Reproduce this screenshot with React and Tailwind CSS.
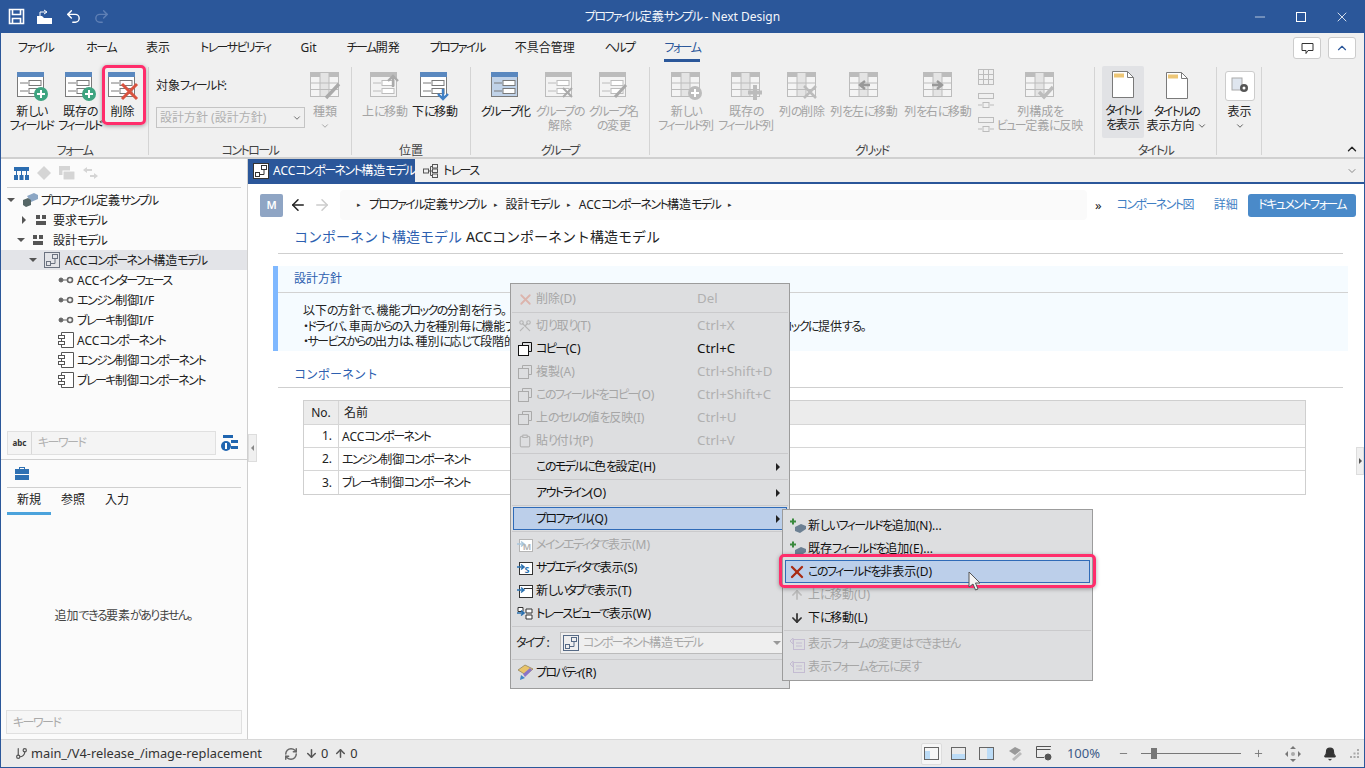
import React from 'react';
import { ArrowDown, ArrowLeft, ArrowRight, ArrowUp, Bell, ChevronDown, ChevronUp, Clipboard, GitBranch, Minus, Plus, Redo2, RefreshCw, Scissors, Undo2, X } from 'lucide-react';

const ON = '#7a7a7a';
const OFF = '#bcbcbc';

// kana runs are set tighter, the UI font of the picture has narrow kana
const J = ({ children }) => (
    <>
        {String(children).split(/([\u3040-\u30ff]+)/).map((part, i) => (
            i % 2 ? <span key={i} className="tracking-[-0.13em]">{part}</span> : part
        ))}
    </>
);

const FormIcon = ({ off, badge, fill }) => {
    const c = off ? OFF : ON;
    return (
        <svg width="32" height="30" viewBox="0 0 32 30">
            <rect x="1.5" y="1.5" width="26" height="24" fill={fill || (off ? '#f3f3f3' : '#fff')} stroke={c} />
            <rect x="1" y="1" width="27" height="5" fill={off ? OFF : '#5a88bf'} />
            <path d="M4 12h8M4 20h8" stroke={c} fill="none" />
            <rect x="13" y="9.5" width="12" height="5" fill="#fff" stroke={c} />
            <rect x="13" y="17.5" width="12" height="5" fill="#fff" stroke={c} />
            {badge === 'plus' && (
                <g>
                    <circle cx="25" cy="23" r="7" fill="#3ea480" />
                    <path d="M25 19v8M21 23h8" stroke="#fff" strokeWidth="2" />
                </g>
            )}
            {badge === 'x' && <path d="M15 13l15 15M30 13L15 28" stroke="#d9533f" strokeWidth="3" />}
            {badge === 'greyx' && <path d="M19 17l9 9M28 17l-9 9" stroke="#aaa" strokeWidth="2" />}
            {badge === 'pen' && <path d="M17 26l11-12" stroke="#aaa" strokeWidth="3" />}
            {badge === 'up' && <path d="M24 16V5M19 10l5-5 5 5" stroke="#aaa" strokeWidth="2.4" fill="none" />}
            {badge === 'down' && <path d="M24 18v10M19 23l5 5 5-5" stroke="#3f7fc4" strokeWidth="2.4" fill="none" />}
        </svg>
    );
};

const GridIcon = ({ badge, w = 32 }) => (
    <svg width={w} height="30" viewBox={`0 0 ${w} 30`}>
        <rect x="1.5" y="1.5" width="28" height="24" fill="#f4f4f4" stroke={OFF} />
        <rect x="1" y="1" width="29" height="5" fill={OFF} />
        <rect x="11" y="1.5" width="9" height="24" fill="#e4e4e4" stroke={OFF} />
        <path d="M1 12h29M1 18.5h29" stroke={OFF} />
        {badge === 'plus' && (
            <g>
                <circle cx="25" cy="22" r="7" fill={OFF} />
                <path d="M25 18v8M21 22h8" stroke="#fff" strokeWidth="2" />
            </g>
        )}
        {badge === 'cross' && <path d="M25 14v15M18 21.5h14" stroke={OFF} strokeWidth="4" />}
        {badge === 'x' && <path d="M18 15l12 12M30 15L18 27" stroke={OFF} strokeWidth="2.6" />}
        {badge === 'pen' && <path d="M17 27L30 13" stroke="#aaa" strokeWidth="3.4" />}
        {badge === 'left' && <path d="M22 14h-8M17 10l-5 4 5 4" stroke="#999" strokeWidth="2.4" fill="none" />}
        {badge === 'right' && <path d="M10 14h8M15 10l5 4-5 4" stroke="#999" strokeWidth="2.4" fill="none" />}
        {badge === 'check' && <path d="M15 21l5 5 9-10" stroke={OFF} strokeWidth="3.4" fill="none" />}
    </svg>
);

const PageIcon = () => (
    <svg width="24" height="30" viewBox="0 0 24 30">
        <path d="M1.5 1.5h15l6 6v20h-21z" fill="#fff" stroke="#7a7a7a" />
        <path d="M16.5 1.5v6h6" fill="none" stroke="#7a7a7a" />
        <rect x="3" y="3.5" width="10" height="4" fill="#edc676" />
    </svg>
);

const RibbonButton = ({ w, icon, lines, off, chev }) => (
    <div className="flex flex-col items-center shrink-0" style={{ width: w }}>
        <div className="h-[36px] flex items-center justify-center mt-[1px]">{icon}</div>
        <div className={`mt-[1px] text-center leading-[14px] whitespace-nowrap ${off ? 'text-[#a4a4a4]' : 'text-[#222]'}`}>
            {lines.map((l, i) => (
                <div key={l} className="flex items-center justify-center">
                    <J>{l}</J>
                    {chev && i === lines.length - 1 && <ChevronDown size={10} color="#444" className="ml-[2px]" />}
                </div>
            ))}
        </div>
    </div>
);

const Group = ({ label, w, children, className = '' }) => (
    <div className={`relative h-[88px] shrink-0 mt-[5px] border-r border-[#d4d4d4] ${className}`} style={{ width: w }}>
        <div className="flex h-[76px] items-start">{children}</div>
        {label && <div className="absolute bottom-[-3px] left-0 right-0 text-center text-[#444] leading-[14px]"><J>{label}</J></div>}
    </div>
);

const ModelGroupIcon = () => (
    <svg width="12" height="12" viewBox="0 0 12 12" fill="#555">
        <rect x="1" y="1" width="4" height="4" />
        <rect x="7" y="1" width="4" height="4" />
        <rect x="1" y="7" width="10" height="4" />
    </svg>
);
const DiagramIcon = ({ c = '#6b7280' }) => (
    <svg width="16" height="16" viewBox="0 0 16 16" fill="none" stroke={c}>
        <rect x="0.5" y="0.5" width="15" height="15" />
        <rect x="8.5" y="2.5" width="5" height="4" />
        <rect x="2.5" y="9.5" width="4" height="4" />
        <path d="M11 6.5v5H6.5" />
    </svg>
);
const InterfaceIcon = () => (
    <svg width="16" height="10" viewBox="0 0 16 10" fill="none" stroke="#666">
        <circle cx="3" cy="5" r="2" fill="#666" />
        <path d="M5 5h4" />
        <circle cx="12" cy="5" r="2.5" strokeWidth="1.6" />
    </svg>
);
const ComponentIcon = () => (
    <svg width="16" height="16" viewBox="0 0 16 16" fill="#fff" stroke="#555">
        <path d="M3.5 0.5h12v15h-12z" />
        <rect x="0.5" y="3.5" width="6" height="3" />
        <rect x="0.5" y="9.5" width="6" height="3" />
    </svg>
);
const PackageIcon = () => (
    <svg width="16" height="14" viewBox="0 0 16 14">
        <path d="M5 3l7-3 4 2v4l-7 3z" fill="#8ba6c4" />
        <path d="M1 7l5-2 3 2v5l-5 2-3-2z" fill="#566" />
    </svg>
);
const Caret = ({ open }) => (
    <svg width="8" height="8" viewBox="0 0 8 8" fill="#555">
        {open ? <path d="M0 2h8L4 6z" /> : <path d="M2 0l4 4-4 4z" />}
    </svg>
);

const treeRows = [
    { label: 'プロファイル定義サンプル', pad: 6, caret: 'open', icon: <PackageIcon />, gap: 3 },
    { label: '要求モデル', pad: 19, caret: 'closed', icon: <ModelGroupIcon />, gap: 6 },
    { label: '設計モデル', pad: 16, caret: 'open', icon: <ModelGroupIcon />, gap: 9 },
    { label: 'ACCコンポーネント構造モデル', pad: 28, caret: 'open', icon: <DiagramIcon />, gap: 5, selected: true },
    { label: 'ACCインターフェース', pad: 57, icon: <InterfaceIcon />, gap: 3 },
    { label: 'エンジン制御I/F', pad: 57, icon: <InterfaceIcon />, gap: 3 },
    { label: 'ブレーキ制御I/F', pad: 57, icon: <InterfaceIcon />, gap: 3 },
    { label: 'ACCコンポーネント', pad: 57, icon: <ComponentIcon />, gap: 3 },
    { label: 'エンジン制御コンポーネント', pad: 57, icon: <ComponentIcon />, gap: 3 },
    { label: 'ブレーキ制御コンポーネント', pad: 57, icon: <ComponentIcon />, gap: 3 },
];

const Copy = ({ c = '#aaa' }) => (
    <svg width="14" height="14" viewBox="0 0 14 14" fill="none" stroke={c}>
        <path d="M4.5 3.5v-3h9v9h-3" />
        <rect x="0.5" y="3.5" width="10" height="10" fill={c === '#111' ? '#fff' : 'none'} />
    </svg>
);

const JumpIcon = ({ letter, off, tree, tab }) => (
    <svg width="16" height="15" viewBox="0 0 16 15" fill="none" stroke={off ? '#b5b5b5' : '#333'}>
        {!tree && <rect x="2.5" y="2.5" width="13" height="12" fill="#fff" />}
        {tab && <path d="M7 5.5h8" />}
        {tree && <path d="M1 1.5h5v4H1zM9 3h6v4H9zM9 9h6v4H9z" fill="#fff" />}
        <path d="M0 7h6M4 4.5L7 7l-3 2.5" stroke={off ? '#a9c6dc' : '#2a71b0'} strokeWidth="1.6" />
        {letter && <text x="10" y="13" fontSize="9" stroke="none" textAnchor="middle" fontWeight="700" fill={off ? '#b5b5b5' : '#2a71b0'}>{letter}</text>}
    </svg>
);

const AddFieldIcon = () => (
    <svg width="18" height="16" viewBox="0 0 18 16">
        <path d="M2 3.5h6M5 0.5v6" stroke="#3b8a3e" strokeWidth="2" />
        <path d="M7 9l6-3 5 2v3l-6 4-5-2z" fill="#6c8093" />
    </svg>
);
const FormResetIcon = () => (
    <svg width="15" height="13" viewBox="0 0 15 13" fill="none" stroke="#c4bcd2">
        <rect x="3.5" y="2.5" width="11" height="10" />
        <path d="M6 6h6M6 9h6M0 4l3-3v6z" />
    </svg>
);
const PropertyIcon = () => (
    <svg width="17" height="17" viewBox="0 0 17 17">
        <path d="M1 6l7-5 8 4-7 6z" fill="#e9c46a" stroke="#8a7b55" strokeWidth="0.7" />
        <path d="M6 10l7-6 2 2-7 7z" fill="#8a74c9" />
        <path d="M3 16l1-5 4 3z" fill="#3f86c6" />
    </svg>
);

const mainMenu = [
    { label: '削除(D)', key: 'Del', off: true, h: 24, icon: <X size={17} color="#dcb4ac" strokeWidth={2.5} /> },
    'sep',
    { label: '切り取り(T)', key: 'Ctrl+X', off: true, icon: <Scissors size={14} color="#b5b5b5" className="rotate-90" /> },
    { label: 'コピー(C)', key: 'Ctrl+C', icon: <Copy c="#111" /> },
    { label: '複製(A)', key: 'Ctrl+Shift+D', off: true, icon: <Copy /> },
    { label: 'このフィールドをコピー(O)', key: 'Ctrl+Shift+C', off: true, icon: <Copy /> },
    { label: '上のセルの値を反映(I)', key: 'Ctrl+U', off: true, icon: <Copy /> },
    { label: '貼り付け(P)', key: 'Ctrl+V', off: true, icon: <Clipboard size={14} color="#b5b5b5" /> },
    'sep',
    { label: 'このモデルに色を設定(H)', arrow: true },
    'sep',
    { label: 'アウトライン(O)', arrow: true },
    'sep',
    { label: 'プロファイル(Q)', arrow: true, active: true },
    'sep',
    { label: 'メインエディタで表示(M)', off: true, icon: <JumpIcon letter="M" off /> },
    { label: 'サブエディタで表示(S)', icon: <JumpIcon letter="S" /> },
    { label: '新しいタブで表示(T)', icon: <JumpIcon tab /> },
    { label: 'トレースビューで表示(W)', icon: <JumpIcon tree /> },
    'sep',
    'type',
    'sep',
    { label: 'プロパティ(R)', icon: <PropertyIcon /> },
];

const subMenu = [
    { label: '新しいフィールドを追加(N)...', icon: <AddFieldIcon /> },
    { label: '既存フィールドを追加(E)...', icon: <AddFieldIcon /> },
    { label: 'このフィールドを非表示(D)', active: true, icon: <X size={20} color="#a92b12" strokeWidth={2.8} /> },
    { label: '上に移動(U)', off: true, icon: <ArrowUp size={14} color="#bbb" strokeWidth={3} /> },
    { label: '下に移動(L)', icon: <ArrowDown size={14} color="#333" strokeWidth={3} /> },
    'sep',
    { label: '表示フォームの変更はできません', off: true, icon: <FormResetIcon /> },
    { label: '表示フォームを元に戻す', off: true, icon: <FormResetIcon /> },
];

const MenuRow = ({ item, keyWidth }) => (
    <div className={`relative flex items-center mx-[2px] border ${item.active ? 'bg-[#bccfea] border-[#2f6bb8]' : 'border-transparent'} ${item.off ? 'text-[#a6a6a6]' : 'text-[#111]'}`} style={{ height: item.h || 23 }}>
        <div className="w-[22px] flex justify-center shrink-0">{item.icon}</div>
        <div className="whitespace-nowrap" style={{ width: keyWidth }}><J>{item.label}</J></div>
        {item.key && <div className={`text-[13.3px] ${item.off ? 'text-[#b0b0b0]' : 'text-[#111]'}`}>{item.key}</div>}
        {item.arrow && <div className="absolute right-[6px] w-0 h-0 border-y-[4px] border-y-transparent border-l-[4px] border-l-[#222]" />}
    </div>
);

const tabs = ['ファイル', 'ホーム', '表示', 'トレーサビリティ', 'Git', 'チーム開発', 'プロファイル', '不具合管理', 'ヘルプ', 'フォーム'];

export default function App() {
    return (
        <div className="relative w-[1365px] h-[768px] overflow-hidden flex flex-col bg-white border-x border-b border-[#2b579a] text-[12px] text-[#222] [font-family:'Noto_Sans','Noto_Sans_CJK_JP',sans-serif] [font-feature-settings:'palt']">
            {/* title bar */}
            <div className="relative h-[33px] shrink-0 bg-[#2b579a] flex items-center text-white">
                <div className="flex items-center gap-[11px] pl-[7px]">
                    <svg width="17" height="17" viewBox="0 0 17 17" fill="none" stroke="#fff" strokeWidth="1.6"><path d="M1.5 1.5h14v14h-14z" /><path d="M4.5 1.5v5h8v-5M4.5 15.5v-5h8v5" /></svg>
                    <svg width="18" height="16" viewBox="0 0 18 16" fill="#fff"><path d="M1 7h5l2 2h8v6H1z" /><path d="M4 7V3h6M8 1l3 2-3 2" stroke="#fff" fill="none" /></svg>
                    <Undo2 size={17} strokeWidth={2} />
                    <Redo2 size={17} strokeWidth={2} color="#5e7fb5" />
                </div>
                <div className="absolute left-0 right-0 text-center text-[#f4f6fa]"><J>プロファイル定義サンプル - Next Design</J></div>
                <div className="ml-auto flex items-center gap-[28px] pr-[14px]">
                    <Minus size={16} strokeWidth={1} />
                    <div className="w-[10px] h-[10px] border border-white" />
                    <X size={16} strokeWidth={1.2} />
                </div>
            </div>

            {/* ribbon tabs */}
            <div className="h-[29px] shrink-0 bg-[#f0f0f0] flex items-center pl-[17px] gap-[30px] relative">
                {tabs.map((t) => (
                    <div key={t} className={`relative h-full flex items-center whitespace-nowrap ${t === 'ホーム' ? 'ml-[3px]' : ''} ${t === 'フォーム' ? 'text-[#2b579a]' : ''}`}>
                        <J>{t}</J>
                        {t === 'フォーム' && <div className="absolute bottom-0 left-0 right-0 h-[3px] bg-[#2b579a]" />}
                    </div>
                ))}
                <div className="absolute right-[8px] top-[4px] flex gap-[7px]">
                    <div className="w-[28px] h-[22px] bg-white border border-[#ccc] rounded-[3px] flex items-center justify-center">
                        <svg width="13" height="13" viewBox="0 0 13 13" fill="none" stroke="#333"><path d="M1 1.5h11v7H7l-2 3v-3H1z" /></svg>
                    </div>
                    <div className="w-[28px] h-[22px] bg-white border border-[#ccc] rounded-[3px] flex items-center justify-center">
                        <ChevronUp size={14} color="#2b579a" />
                    </div>
                </div>
            </div>

            {/* ribbon */}
            <div className="relative h-[97px] shrink-0 bg-[#f0f0f0] border-b-2 border-[#d0d0d0] flex">
                <Group label="フォーム" w={148} className="pl-[6px]">
                    <RibbonButton w={49} icon={<FormIcon badge="plus" />} lines={['新しい', 'フィールド']} />
                    <RibbonButton w={48} icon={<FormIcon badge="plus" />} lines={['既存の', 'フィールド']} />
                    <RibbonButton w={37} icon={<FormIcon badge="x" />} lines={['削除']} />
                </Group>
                <Group label="コントロール" w={203} className="pl-[7px]">
                    <div className="w-[149px] shrink-0">
                        <div className="mt-[11px] h-[16px] leading-[16px]"><J>対象フィールド:</J></div>
                        <div className="mt-[13px] h-[21px] border border-[#c4c4c4] bg-[#f0f0f0] flex items-center pl-[3px] pr-[2px] text-[#b0b0b0]">
                            設計方針 (設計方針)
                            <ChevronDown size={10} color="#555" className="ml-auto" />
                        </div>
                    </div>
                    <div className="w-[40px] flex flex-col items-center shrink-0">
                        <div className="h-[36px] mt-[1px] flex items-center"><GridIcon badge="pen" /></div>
                        <div className="mt-[1px] text-[#a4a4a4] leading-[14px]">種類</div>
                        <ChevronDown size={10} color="#999" className="mt-[2px]" />
                    </div>
                </Group>
                <Group label="位置" w={119} className="pl-[8px]">
                    <RibbonButton w={50} off icon={<FormIcon off badge="up" />} lines={['上に移動']} />
                    <RibbonButton w={50} icon={<FormIcon badge="down" />} lines={['下に移動']} />
                </Group>
                <Group label="グループ" w={179} className="pl-[8px]">
                    <RibbonButton w={54} icon={<FormIcon fill="#c0d2e8" />} lines={['グループ化']} />
                    <RibbonButton w={54} off icon={<FormIcon off badge="greyx" />} lines={['グループの', '解除']} />
                    <RibbonButton w={54} off icon={<FormIcon off badge="pen" />} lines={['グループ名', 'の変更']} />
                </Group>
                <Group label="グリッド" w={445} className="pl-[6px]">
                    <RibbonButton w={60} off icon={<GridIcon badge="plus" />} lines={['新しい', 'フィールド列']} />
                    <RibbonButton w={60} off icon={<GridIcon badge="cross" />} lines={['既存の', 'フィールド列']} />
                    <RibbonButton w={52} off icon={<GridIcon badge="x" />} lines={['列の削除']} />
                    <RibbonButton w={72} off icon={<GridIcon badge="left" />} lines={['列を左に移動']} />
                    <RibbonButton w={76} off icon={<GridIcon badge="right" />} lines={['列を右に移動']} />
                    <div className="w-[20px] shrink-0 flex flex-col items-center gap-[8px] pt-[2px]">
                        <svg width="16" height="16" viewBox="0 0 16 16" fill="none" stroke={OFF}><rect x="0.5" y="0.5" width="15" height="15" /><path d="M5.5 0v16M0 5.5h16M0 10.5h16M10.5 0v16" /></svg>
                        <svg width="16" height="16" viewBox="0 0 16 16" fill="none" stroke={OFF}><rect x="0.5" y="0.5" width="15" height="5" /><rect x="5" y="9.5" width="6" height="5" /><path d="M0 12h4M12 12h4" /></svg>
                        <svg width="16" height="16" viewBox="0 0 16 16" fill="none" stroke={OFF}><rect x="0.5" y="0.5" width="15" height="5" /><rect x="5" y="9.5" width="6" height="5" /><path d="M0 12h4M12 12h4" /></svg>
                    </div>
                    <RibbonButton w={88} off icon={<GridIcon badge="check" />} lines={['列構成を', 'ビュー定義に反映']} />
                </Group>
                <Group label="タイトル" w={122} className="pl-[7px]">
                    <div className="bg-[#e1e2e5] rounded-[2px] h-[72px] -mt-px"><RibbonButton w={42} icon={<PageIcon />} lines={['タイトル', 'を表示']} /></div>
                    <RibbonButton w={65} icon={<PageIcon />} lines={['タイトルの', '表示方向']} chev />
                </Group>
                <Group w={45} className="pl-[7px]">
                    <div className="flex flex-col items-center w-[31px] shrink-0">
                        <div className="mt-[4px] w-[30px] h-[30px] bg-white border border-[#ccc] rounded-[3px] flex items-center justify-center">
                            <svg width="18" height="18" viewBox="0 0 18 18"><rect x="1" y="1" width="10" height="12" fill="#dfe6ef" stroke="#aaa" /><circle cx="13" cy="11" r="4" fill="#555" /><circle cx="13" cy="11" r="1.5" fill="#fff" /></svg>
                        </div>
                        <div className="mt-[4px] leading-[14px]">表示</div>
                        <ChevronDown size={10} color="#444" className="mt-[2px]" />
                    </div>
                </Group>
                <ChevronUp size={14} color="#222" strokeWidth={2.4} className="absolute right-[5px] bottom-[1px]" />
            </div>

            {/* body */}
            <div className="flex-1 min-h-0 flex">
                <div className="w-[247px] shrink-0 bg-[#fbfbfb] border-r border-[#cfcfcf] flex flex-col">
                    <div className="h-[29px] shrink-0 mx-[6px] border-b border-[#d2d2d2] flex items-center gap-[8px] pl-[7px]">
                        <svg width="15" height="13" viewBox="0 0 15 13" fill="#2b6cb0"><rect x="0" y="0" width="15" height="4" /><rect x="0" y="8" width="4" height="5" /><rect x="5.5" y="8" width="4" height="5" /><rect x="11" y="8" width="4" height="5" /><path d="M2 4h1v4H2zM7 4h1v4H7zM12 4h1v4h-1z" /></svg>
                        <svg width="14" height="14" viewBox="0 0 14 14" fill="#d5d5d5"><path d="M7 0l7 7-7 7-7-7z" /></svg>
                        <svg width="16" height="14" viewBox="0 0 16 14" fill="#d5d5d5"><rect x="0" y="0" width="11" height="9" /><rect x="4" y="5" width="12" height="9" stroke="#fff" /></svg>
                        <svg width="15" height="13" viewBox="0 0 15 13" fill="#d5d5d5"><path d="M0 3l4-3v2h5v2H4v2zM15 9l-4 3v-2H7V8h4V6z" /></svg>
                    </div>
                    <div className="pt-[2px] h-[243px] shrink-0">
                        {treeRows.map((r) => (
                            <div key={r.label} className={`h-[20px] flex items-center ${r.selected ? 'bg-[#e3e4e8]' : ''}`} style={{ paddingLeft: r.pad }}>
                                {r.caret && <div className="w-[8px] mr-[7px] flex justify-center"><Caret open={r.caret === 'open'} /></div>}
                                <div style={{ marginRight: r.gap }} className="flex items-center">{r.icon}</div>
                                <span className="whitespace-nowrap pt-[1px]"><J>{r.label}</J></span>
                            </div>
                        ))}
                    </div>
                    <div className="shrink-0 flex items-center h-[24px] pl-[6px] pr-[8px]">
                        <div className="w-[209px] h-[24px] border border-[#e0e0e0] bg-[#f4f4f4] flex items-center">
                            <div className="w-[24px] h-full border-r border-[#d8d8d8] flex items-center justify-center text-[8px] font-bold text-[#333]">abc</div>
                            <span className="pl-[6px] text-[#b0b0b0]"><J>キーワード</J></span>
                        </div>
                        <svg className="ml-auto mr-[1px]" width="17" height="16" viewBox="0 0 17 16" fill="#1f65b0"><rect x="2" y="0" width="10" height="3" /><circle cx="5" cy="11" r="5" /><rect x="10" y="5" width="7" height="3" /><rect x="10" y="11" width="7" height="3" /><rect x="4" y="8" width="2" height="6" fill="#fff" /></svg>
                    </div>
                    <div className="h-[5px] shrink-0 border-b border-[#d0d0d0]" />
                    <div className="h-[28px] shrink-0 mx-[6px] border-b border-[#d0d0d0] flex items-center pl-[8px]">
                        <svg width="14" height="13" viewBox="0 0 14 13" fill="#2f71b3"><path d="M4 2V0h6v2h4v5H0V2zM5 1v1h4V1zM0 8h14v5H0z" /></svg>
                    </div>
                    <div className="h-[27px] shrink-0 flex pl-[6px]">
                        <div className="w-[44px] text-center pt-[3px] border-b-[3px] border-[#4ba3dc]">新規</div>
                        <div className="w-[44px] text-center pt-[3px]">参照</div>
                        <div className="w-[44px] text-center pt-[3px]">入力</div>
                    </div>
                    <div className="flex-1 flex items-center justify-center text-[#444] pt-[6px]"><J>追加できる要素がありません。</J></div>
                    <div className="shrink-0 h-[24px] mx-[5px] mb-[5px] border border-[#e0e0e0] bg-[#f6f6f6] flex items-center pl-[6px] pt-[2px] text-[#aaa]"><J>キーワード</J></div>
                </div>

                <div className="flex-1 min-w-0 flex flex-col">
                    <div className="h-[25px] shrink-0 bg-[#f0f0f0] border-b-2 border-[#2b579a] flex items-stretch relative">
                        <div className="w-[167px] bg-[#2b579a] text-white flex items-center pl-[5px] gap-[4px] whitespace-nowrap">
                            <div className="bg-white"><DiagramIcon c="#333" /></div>
                            <span><J>ACCコンポーネント構造モデル</J></span>
                        </div>
                        <div className="flex items-center pl-[8px] gap-[5px]">
                            <svg width="15" height="14" viewBox="0 0 15 14" fill="none" stroke="#555"><rect x="0.5" y="5" width="5" height="4" /><rect x="9.5" y="0.5" width="5" height="3.5" /><rect x="9.5" y="5" width="5" height="3.5" /><rect x="9.5" y="10" width="5" height="3.5" /><path d="M5.5 7h4M7.5 2.5v9M7.5 2.5h2M7.5 11.5h2" /></svg>
                            <span><J>トレース</J></span>
                        </div>
                        <ChevronDown size={12} color="#888" className="absolute right-[6px] top-[6px]" />
                    </div>

                    <div className="h-[36px] shrink-0 flex items-center pl-[12px] pr-[8px] pt-[6px]">
                        <div className="w-[23px] h-[23px] rounded-[2px] bg-[#8fa5c4] text-white text-[11px] font-semibold flex items-center justify-center">M</div>
                        <ArrowLeft size={18} color="#222" className="ml-[6px]" />
                        <ArrowRight size={18} color="#ccc" className="ml-[6px]" />
                        <div className="ml-[9px] w-[747px] h-[30px] bg-[#fafafa] rounded-[4px] flex items-center pl-[17px] gap-[8px]">
                            <span className="text-[7px] text-[#333]">▸</span><span><J>プロファイル定義サンプル</J></span>
                            <span className="text-[7px] text-[#333]">▸</span><span><J>設計モデル</J></span>
                            <span className="text-[7px] text-[#333]">▸</span><span><J>ACCコンポーネント構造モデル</J></span>
                            <span className="text-[7px] text-[#333]">▸</span>
                        </div>
                        <div className="ml-[8px] text-[13px] leading-none">»</div>
                        <div className="ml-[15px] text-[#3f7fc4] w-[77px] whitespace-nowrap"><J>コンポーネント図</J></div>
                        <div className="ml-[20px] text-[#3f7fc4]">詳細</div>
                        <div className="ml-auto w-[108px] h-[23px] rounded-[3px] bg-[#4a8ac9] text-white flex items-center justify-center"><J>ドキュメントフォーム</J></div>
                    </div>

                    <div className="ml-[30px] mr-[21px] h-[34px] shrink-0 border-b border-[#cfcfcf] flex items-center pl-[16px] text-[14px] pb-[1px] [font-feature-settings:normal]">
                        <span className="text-[#2d5fb0]">コンポーネント構造モデル</span>
                        <span className="ml-[4px]">ACCコンポーネント構造モデル</span>
                    </div>

                    <div className="ml-[25px] mr-[16px] mt-[12px] h-[85px] shrink-0 bg-[#f5fbff] border-l-[5px] border-[#7fb8ff]">
                        <div className="h-[27px] border-b border-[#d2d2d2] flex items-center pl-[16px] text-[#2d5fb0]">設計方針</div>
                        <div className="pl-[25px] pt-[10px] leading-[15.5px] whitespace-nowrap">
                            <div><J>以下の方針で、機能ブロックの分割を行う。</J></div>
                            <div><J>・ドライバ、車両からの入力を種別毎に機能ブロックへ分割し、要求された各種の情報一覧を各制御ブロックに提供する。</J></div>
                            <div><J>・サービスからの出力は、種別に応じて段階的に処理する。</J></div>
                        </div>
                    </div>

                    <div className="ml-[30px] mr-[21px] mt-[13px] h-[24px] shrink-0 border-b border-[#cfcfcf] pl-[16px] text-[#2d5fb0] leading-[22px] [font-feature-settings:normal]">コンポーネント</div>

                    <div className="ml-[55px] mr-[58px] mt-[12px] shrink-0 border border-[#cfcfcf]">
                        <div className="h-[24px] bg-[#ececec] flex border-b border-[#d6d6d6] items-center">
                            <div className="w-[35px] h-full border-r border-[#d6d6d6] flex items-center justify-center">No.</div>
                            <div className="pl-[5px]">名前</div>
                        </div>
                        {['ACCコンポーネント', 'エンジン制御コンポーネント', 'ブレーキ制御コンポーネント'].map((n, i) => (
                            <div key={n} className="h-[23px] flex items-center border-b border-[#d6d6d6] last:border-b-0">
                                <div className="w-[35px] h-full border-r border-[#d6d6d6] flex items-center justify-end pr-[6px]">{i + 1}.</div>
                                <div className="pl-[3px] pt-[1px]"><J>{n}</J></div>
                            </div>
                        ))}
                    </div>
                </div>
            </div>

            {/* status bar */}
            <div className="h-[28px] shrink-0 bg-[#ebebeb] border-t border-[#d8d8d8] flex items-center text-[12.8px] text-[#333] relative">
                <GitBranch size={13} color="#555" className="ml-[14px]" strokeWidth={2.2} />
                <span className="ml-[3px]">main_/V4-release_/image-replacement</span>
                <RefreshCw size={14} color="#666" strokeWidth={2.5} className="ml-[22px]" />
                <ArrowDown size={13} color="#555" strokeWidth={2.8} className="ml-[7px]" />
                <span className="ml-[3px]">0</span>
                <ArrowUp size={13} color="#555" strokeWidth={2.8} className="ml-[6px]" />
                <span className="ml-[3px]">0</span>
                <div className="ml-auto flex items-center pr-[4px]">
                    <div className="w-[21px] h-[22px] bg-[#f6f6f6] border border-[#ddd] rounded-[2px] flex items-center justify-center">
                        <svg width="15" height="13" viewBox="0 0 15 13" fill="none" stroke="#666"><rect x="0.5" y="0.5" width="14" height="12" /><rect x="1" y="4" width="5" height="8" fill="#bcdcf7" stroke="none" /></svg>
                    </div>
                    <svg className="ml-[9px]" width="15" height="13" viewBox="0 0 15 13" fill="none" stroke="#666"><rect x="0.5" y="0.5" width="14" height="12" /><rect x="1" y="7" width="13" height="5" fill="#bcdcf7" stroke="none" /></svg>
                    <svg className="ml-[13px]" width="15" height="13" viewBox="0 0 15 13" fill="none" stroke="#666"><rect x="0.5" y="0.5" width="14" height="12" /><rect x="8" y="1" width="6" height="11" fill="#bcdcf7" stroke="none" /></svg>
                    <svg className="ml-[13px]" width="16" height="16" viewBox="0 0 16 16"><path d="M2 5l6-4 6 3-6 5z" fill="#999" /><path d="M5 13l8-7 2 2-8 7z" fill="#bbb" /></svg>
                    <svg className="ml-[13px]" width="16" height="15" viewBox="0 0 16 15" fill="none" stroke="#555"><path d="M15 0.5H0.5v11H8" /><path d="M0.5 3.5h14" /><circle cx="12" cy="11" r="3" fill="#555" /></svg>
                    <span className="ml-[15px] text-[#3c5a88] text-[13px]">100%</span>
                    <Minus size={11} color="#777" className="ml-[18px]" />
                    <div className="ml-[12px] relative w-[100px] h-[1px] bg-[#777]">
                        <div className="absolute left-[10px] top-[-5px] w-[6px] h-[11px] bg-[#777]" />
                    </div>
                    <Plus size={11} color="#777" className="ml-[12px]" />
                    <svg className="ml-[21px]" width="16" height="16" viewBox="0 0 16 16" fill="#777"><path d="M8 0l3 3H5zM8 16l-3-3h6zM0 8l3-3v6zM16 8l-3 3V5z" /><circle cx="8" cy="8" r="2" fill="#aaa" /></svg>
                    <Bell size={14} color="#333" fill="#333" className="ml-[22px]" />
                    <svg className="ml-[13px]" width="10" height="10" viewBox="0 0 10 10" fill="#aaa"><rect x="7" y="0" width="2" height="2" /><rect x="3.5" y="3.5" width="2" height="2" /><rect x="7" y="3.5" width="2" height="2" /><rect x="0" y="7" width="2" height="2" /><rect x="3.5" y="7" width="2" height="2" /><rect x="7" y="7" width="2" height="2" /></svg>
                </div>
            </div>

            {/* pane handles */}
            <div className="absolute left-[247px] top-[434px] w-[9px] h-[28px] bg-[#f0f0f0] border border-[#ddd] flex items-center justify-center">
                <div className="w-0 h-0 border-y-[3px] border-y-transparent border-r-[3px] border-r-[#888]" />
            </div>
            <div className="absolute right-0 top-[447px] w-[8px] h-[28px] bg-[#f0f0f0] border border-[#ddd] flex items-center justify-center">
                <div className="w-0 h-0 border-y-[3px] border-y-transparent border-l-[3px] border-l-[#555]" />
            </div>

            {/* context menu */}
            <div className="absolute left-[509px] top-[283px] w-[280px] h-[406px] bg-[#dddee0] border border-[#9c9c9c] pt-[3px] z-10">
                {mainMenu.map((item, i) => {
                    if (item === 'sep') return <div key={i} className="h-[3px] flex items-center mx-[1px]"><div className="w-full h-px bg-[#cacacc]" /></div>;
                    if (item === 'type') {
                        return (
                            <div key={i} className="h-[30px] flex items-center pl-[5px]">
                                <span className="w-[44px]"><J>タイプ :</J></span>
                                <div className="w-[226px] h-[22px] border border-[#bbb] bg-[#efefef] flex items-center pl-[2px] text-[#a8a8a8]">
                                    <DiagramIcon c="#566a86" />
                                    <span className="ml-[4px]"><J>コンポーネント構造モデル</J></span>
                                    <div className="ml-auto mr-[4px] w-0 h-0 border-x-[4px] border-x-transparent border-t-[4px] border-t-[#999]" />
                                </div>
                            </div>
                        );
                    }
                    return <MenuRow key={item.label} item={item} keyWidth={161} />;
                })}
            </div>

            {/* sub menu */}
            <div className="absolute left-[781px] top-[509px] w-[311px] h-[172px] bg-[#dddee0] border border-[#9c9c9c] pt-[4px] z-20">
                {subMenu.map((item, i) => (
                    item === 'sep'
                        ? <div key={i} className="h-[3px] flex items-center mx-[1px]"><div className="w-full h-px bg-[#cacacc]" /></div>
                        : <MenuRow key={item.label} item={item} keyWidth={270} />
                ))}
            </div>

            {/* callouts */}
            <div className="absolute left-[101px] top-[65px] w-[44px] h-[60px] border-[3px] border-[#ff2d6b] rounded-[5px] shadow-[0_1px_4px_rgba(0,0,0,0.35)] z-30" />
            <div className="absolute left-[778px] top-[554px] w-[317px] h-[34px] border-[3px] border-[#ff2d6b] rounded-[5px] shadow-[0_1px_4px_rgba(0,0,0,0.35)] z-30" />

            {/* cursor */}
            <svg className="absolute left-[967px] top-[571px] z-40" width="13" height="20" viewBox="0 0 13 20">
                <path d="M1 1v15l4-3 2.5 6 2.5-1-2.5-6H12z" fill="#f4f4f4" stroke="#555" />
            </svg>
        </div>
    );
}
